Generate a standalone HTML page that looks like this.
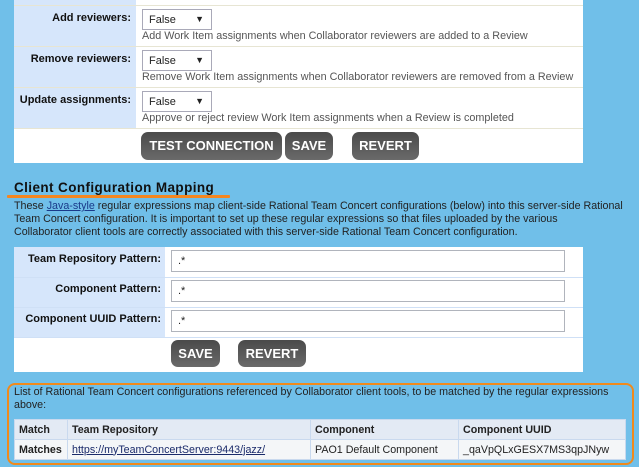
<!DOCTYPE html>
<html><head><meta charset="utf-8"><style>
*{margin:0;padding:0;box-sizing:border-box}
body{width:639px;height:467px;background:#70bfe9;font-family:"Liberation Sans",Tahoma,sans-serif;position:relative;overflow:hidden;color:#222}
.a{position:absolute}
.panel{background:#fff}
.lab{background:#d6e6fb;font-weight:bold;font-size:11px;color:#111;text-align:right;white-space:nowrap}
.sep{background:#e7e5d3;height:1px}
.sel{border:1px solid #a9a9b8;background:#fff;font-size:11px;width:70px;height:21px;padding:4px 0 0 6px}
.sel:after{content:"▼";position:absolute;right:7px;top:4px;font-size:9px}
.desc{font-size:10.8px;color:#555;white-space:nowrap}
.btn{background:linear-gradient(#4a4a4a,#6a6a6a);border-radius:7px;color:#fff;font-weight:bold;font-size:13px;text-align:center;line-height:28px;height:28px}
.inp{border:1px solid #b0b4bc;background:#fff;height:22px;font-size:11px;padding:4px 0 0 6px}
.t{font-size:10.7px;white-space:nowrap;color:#222}
td{border:1px solid #c9d9ee;font-size:10.7px;padding:0 4px;height:20px;white-space:nowrap}
</style></head><body>
<div class="a panel" style="left:14px;top:0;width:569px;height:163px"></div>
<div class="a lab" style="left:14px;top:0;width:122px;height:128px"></div>
<div class="a sep" style="left:14px;top:5px;width:569px"></div>
<div class="a sep" style="left:14px;top:46px;width:569px"></div>
<div class="a sep" style="left:14px;top:87px;width:569px"></div>
<div class="a sep" style="left:14px;top:128px;width:569px"></div>
<div class="a lab" style="left:14px;top:12px;width:117px;background:none">Add reviewers:</div>
<div class="a lab" style="left:14px;top:53px;width:117px;background:none">Remove reviewers:</div>
<div class="a lab" style="left:14px;top:94px;width:117px;background:none">Update assignments:</div>
<div class="a sel" style="left:142px;top:9px">False</div>
<div class="a sel" style="left:142px;top:50px">False</div>
<div class="a sel" style="left:142px;top:91px">False</div>
<div class="a desc" style="left:142px;top:30px">Add Work Item assignments when Collaborator reviewers are added to a Review</div>
<div class="a desc" style="left:142px;top:71px">Remove Work Item assignments when Collaborator reviewers are removed from a Review</div>
<div class="a desc" style="left:142px;top:112px">Approve or reject review Work Item assignments when a Review is completed</div>
<div class="a btn" style="left:141px;top:132px;width:141px">TEST CONNECTION</div>
<div class="a btn" style="left:285px;top:132px;width:48px">SAVE</div>
<div class="a btn" style="left:352px;top:132px;width:67px">REVERT</div>

<div class="a" style="left:14px;top:180px;font-size:13.5px;font-weight:bold;color:#111;letter-spacing:0.4px;white-space:nowrap">Client Configuration Mapping</div>
<div class="a" style="left:7px;top:195px;width:223px;height:3px;background:#f5861f;border-radius:1px"></div>
<div class="a t" style="left:14px;top:200px">These <span style="color:#1a3a8a;text-decoration:underline">Java-style</span> regular expressions map client-side Rational Team Concert configurations (below) into this server-side Rational</div>
<div class="a t" style="left:14px;top:213px">Team Concert configuration. It is important to set up these regular expressions so that files uploaded by the various</div>
<div class="a t" style="left:14px;top:226px">Collaborator client tools are correctly associated with this server-side Rational Team Concert configuration.</div>

<div class="a panel" style="left:14px;top:247px;width:569px;height:125px"></div>
<div class="a lab" style="left:14px;top:247px;width:151px;height:90px"></div>
<div class="a sep" style="left:14px;top:277px;width:569px;background:#cfe0f6"></div>
<div class="a sep" style="left:14px;top:307px;width:569px;background:#cfe0f6"></div>
<div class="a sep" style="left:14px;top:337px;width:569px;background:#cfe0f6"></div>
<div class="a lab" style="left:14px;top:253px;width:147px;background:none">Team Repository Pattern:</div>
<div class="a lab" style="left:14px;top:283px;width:147px;background:none">Component Pattern:</div>
<div class="a lab" style="left:14px;top:313px;width:147px;background:none">Component UUID Pattern:</div>
<div class="a inp" style="left:171px;top:250px;width:394px">.*</div>
<div class="a inp" style="left:171px;top:280px;width:394px">.*</div>
<div class="a inp" style="left:171px;top:310px;width:394px">.*</div>
<div class="a btn" style="left:171px;top:340px;width:49px;height:27px;line-height:27px">SAVE</div>
<div class="a btn" style="left:238px;top:340px;width:68px;height:27px;line-height:27px">REVERT</div>

<div class="a" style="left:7px;top:383px;width:627px;height:82px;border:2px solid #f08a1c;border-radius:8px"></div>
<div class="a t" style="left:14px;top:386px">List of Rational Team Concert configurations referenced by Collaborator client tools, to be matched by the regular expressions</div>
<div class="a t" style="left:14px;top:399px">above:</div>
<table class="a" style="left:14px;top:419px;width:612px;border-collapse:collapse">
<tr style="background:#e3eaf4"><td style="width:53px;font-weight:bold">Match</td><td style="width:243px;font-weight:bold">Team Repository</td><td style="width:148px;font-weight:bold">Component</td><td style="font-weight:bold">Component UUID</td></tr>
<tr style="background:#f4f6f8"><td style="font-weight:bold">Matches</td><td><span style="color:#1a2a6a;text-decoration:underline">https://myTeamConcertServer:9443/jazz/</span></td><td>PAO1 Default Component</td><td>_qaVpQLxGESX7MS3qpJNyw</td></tr>
</table>
</body></html>
